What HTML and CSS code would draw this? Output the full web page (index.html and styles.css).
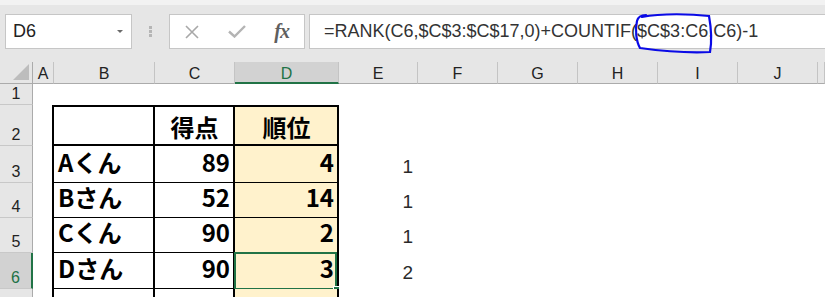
FILE: index.html
```html
<!DOCTYPE html>
<html lang="ja">
<head>
    <meta charset="UTF-8">
    <meta name="viewport" content="width=device-width, initial-scale=1.0">
    <title>RANK + COUNTIF</title>
    <link rel="stylesheet" href="styles.css">
</head>
<body>
    <div class="toolbar">
        <div class="namebox">
            <span>D6</span>
            <span class="caret"></span>
        </div>
        <div class="grip"><i></i><i></i><i></i></div>
        <div class="fx-buttons">
            <span class="btn">
                <svg width="16" height="16" viewBox="0 0 16 16"><path d="M2 2L14 14M14 2L2 14" stroke="#a8a8a8" stroke-width="1.6" fill="none"/></svg>
            </span>
            <span class="btn">
                <svg width="18" height="13" viewBox="0 0 18 13"><path d="M1 6.5L6.5 11.5L17 1" stroke="#b4b4b4" stroke-width="2.4" fill="none"/></svg>
            </span>
            <span class="btn fx">fx</span>
        </div>
        <div class="formula">
            <span>=RANK(C6,$C$3:$C$17,0)+COUNTIF($C$3:C6,C6)-1</span>
            <svg class="ink" width="82" height="44" viewBox="0 0 82 44">
                <path d="M10 6 C30 2, 60 3, 77 5 C79 16, 80 30, 78 41 C58 42, 30 40, 8 37 C4 30, 3 18, 5 10 C6 6, 9 4, 14 4" stroke="#0a0ae6" stroke-width="2.2" fill="none" stroke-linecap="round"/>
            </svg>
        </div>
    </div>

    <div class="sheet">
        <div class="row colhead">
            <div class="corner">
                <svg width="16" height="16" viewBox="0 0 16 16"><path d="M16 0V16H0Z" fill="#bdbdbd"/></svg>
            </div>
            <div class="ch">A</div>
            <div class="ch">B</div>
            <div class="ch">C</div>
            <div class="ch sel">D</div>
            <div class="ch">E</div>
            <div class="ch">F</div>
            <div class="ch">G</div>
            <div class="ch">H</div>
            <div class="ch">I</div>
            <div class="ch">J</div>
            <div class="ch"></div>
        </div>

        <div class="row r1">
            <div class="rh">1</div>
        </div>

        <div class="row r2">
            <div class="rh">2</div>
            <div class="edge"></div>
            <div class="t top head"></div>
            <div class="t top head center">得点</div>
            <div class="t top head center gold">順位</div>
        </div>

        <div class="row r3">
            <div class="rh">3</div>
            <div class="edge"></div>
            <div class="t">Aくん</div>
            <div class="t num">89</div>
            <div class="t num gold">4</div>
            <div class="v">1</div>
        </div>

        <div class="row r4">
            <div class="rh">4</div>
            <div class="edge"></div>
            <div class="t">Bさん</div>
            <div class="t num">52</div>
            <div class="t num gold">14</div>
            <div class="v">1</div>
        </div>

        <div class="row r5">
            <div class="rh">5</div>
            <div class="edge"></div>
            <div class="t">Cくん</div>
            <div class="t num">90</div>
            <div class="t num gold">2</div>
            <div class="v">1</div>
        </div>

        <div class="row r6">
            <div class="rh sel">6</div>
            <div class="edge"></div>
            <div class="t">Dさん</div>
            <div class="t num">90</div>
            <div class="t num gold active">3<span class="cursor"><span class="handle"></span></span></div>
            <div class="v">2</div>
        </div>

        <div class="row r7">
            <div class="rh"></div>
            <div class="edge"></div>
            <div class="t"></div>
            <div class="t num"></div>
            <div class="t num gold"></div>
        </div>
    </div>
</body>
</html>
```

FILE: styles.css
```css
body {
    margin: 0;
    background-color: #ffffff;
    font-family: 'Liberation Sans', Arial, sans-serif;
    overflow: hidden;
}

/* formula bar */
.toolbar {
    height: 62px;
    box-sizing: border-box;
    background-color: #e6e6e6;
    border-top: 5px solid #f2f2f2;
    padding-top: 9px;
    display: flex;
    align-items: flex-start;
}
.namebox {
    margin-left: 5px;
    width: 127px;
    height: 35px;
    box-sizing: border-box;
    background-color: #ffffff;
    border: 1px solid #c6c6c6;
    padding: 0 8px 0 7px;
    display: flex;
    align-items: center;
    justify-content: space-between;
    font-size: 18px;
    color: #222222;
}
.caret {
    border-left: 3px solid transparent;
    border-right: 3px solid transparent;
    border-top: 3px solid #6a6a6a;
}
.grip {
    width: 37px;
    height: 35px;
    display: flex;
    flex-direction: column;
    align-items: center;
    justify-content: center;
    gap: 1px;
}
.grip i {
    width: 3px;
    height: 3px;
    background-color: #b5b5b5;
}
.fx-buttons {
    width: 136px;
    height: 35px;
    box-sizing: border-box;
    background-color: #ffffff;
    border: 1px solid #c6c6c6;
    display: flex;
    align-items: center;
}
.btn {
    width: 45px;
    display: flex;
    justify-content: center;
    align-items: center;
}
.btn.fx {
    font-family: 'Liberation Serif', serif;
    font-style: italic;
    font-weight: bold;
    font-size: 20px;
    color: #5f5f5f;
    letter-spacing: -1px;
}
.formula {
    position: relative;
    flex: 1;
    margin-left: 4px;
    height: 35px;
    box-sizing: border-box;
    background-color: #ffffff;
    border: 1px solid #c6c6c6;
    border-right: none;
    padding-left: 14px;
    display: flex;
    align-items: center;
    font-size: 18px;
    color: #333333;
    white-space: nowrap;
}
.ink {
    position: absolute;
    left: 322px;
    top: -4px;
}

/* grid */
.row {
    display: grid;
    grid-template-columns: 33px 21px 101px 80px 104px 79px 80px 80px 80px 80px 80px 1fr;
}
.row > div {
    box-sizing: border-box;
    display: flex;
    align-items: flex-end;
}
.colhead { height: 22px; background-color: #e6e6e6; }
.r1 { height: 21px; }
.r2 { height: 41px; }
.r3 { height: 37px; }
.r4 { height: 35px; }
.r5 { height: 35px; }
.r6 { height: 36px; }
.r7 { height: 30px; }

.corner {
    justify-content: flex-end;
    padding: 0 3px 3px 0;
    border-right: 1px solid #ababab;
    border-bottom: 1px solid #ababab;
}
.ch {
    justify-content: center;
    font-size: 16px;
    line-height: 16px;
    color: #222222;
    padding-bottom: 1px;
    border-right: 1px solid #c4c4c4;
    border-bottom: 1px solid #ababab;
}
.ch.sel {
    background-color: #d2d2d2;
    color: #217346;
    border-bottom: 2px solid #217346;
    padding-bottom: 0;
}
.rh {
    justify-content: center;
    background-color: #e6e6e6;
    font-size: 16px;
    line-height: 16px;
    color: #222222;
    padding-bottom: 2px;
    border-right: 1px solid #ababab;
    border-bottom: 1px solid #c8c8c8;
}
.rh.sel {
    background-color: #d2d2d2;
    color: #217346;
    border-right: 2px solid #217346;
}

/* table */
.edge {
    border-right: 2px solid #000000;
}
.t {
    position: relative;
    font-family: 'Noto Sans CJK JP', sans-serif;
    font-weight: bold;
    font-size: 24px;
    line-height: 24px;
    color: #000000;
    padding: 0 3px 8px 4px;
    border-right: 2px solid #000000;
    border-bottom: 1px solid #000000;
}
.t.top {
    border-top: 2px solid #000000;
}
.t.head {
    border-bottom: 2px solid #000000;
    padding-bottom: 5px;
}
.t.center {
    justify-content: center;
}
.t.num {
    justify-content: flex-end;
}
.gold {
    background-color: #fff2cc;
}
.cursor {
    position: absolute;
    top: -1px;
    left: -1px;
    right: 0;
    bottom: -2px;
    border: 2px solid #217346;
}
.handle {
    position: absolute;
    right: -5px;
    bottom: -5px;
    width: 5px;
    height: 5px;
    background-color: #217346;
    border: 1px solid #ffffff;
}
.v {
    justify-content: flex-end;
    font-size: 19px;
    line-height: 19px;
    color: #2a2a2a;
    padding: 0 5px 7px 0;
}
```
